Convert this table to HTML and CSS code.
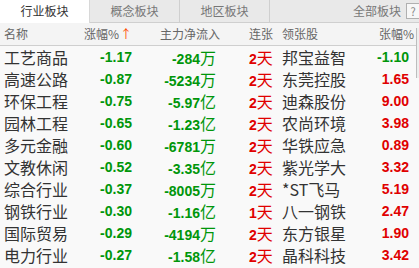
FILE: index.html
```html
<!DOCTYPE html>
<html>
<head>
<meta charset="utf-8">
<link rel="stylesheet" href="styles.css">
</head>
<body>
<div class="panel">
  <div class="tabs">
    <div class="tab active">行业板块</div>
    <div class="tab">概念板块</div>
    <div class="tab">地区板块</div>
    <div class="tab-rest">
      <span class="all">全部板块</span>
      <span class="help">?</span>
    </div>
  </div>
  <div class="grid head">
    <div class="c-name">名称</div>
    <div class="c-pct">涨幅%<span class="arrow">↑</span></div>
    <div class="c-flow">主力净流入</div>
    <div class="c-streak">连张</div>
    <div class="c-lead">领张股</div>
    <div class="c-pct2">张幅%</div>
  </div>
  <div class="rows">
    <div class="grid row"><div class="c-name">工艺商品</div><div class="c-pct num green">-1.17</div><div class="c-flow green"><span class="num">-284</span>万</div><div class="c-streak red"><span class="num">2</span>天</div><div class="c-lead">邦宝益智</div><div class="c-pct2 num green">-1.10</div></div>
    <div class="grid row"><div class="c-name">高速公路</div><div class="c-pct num green">-0.87</div><div class="c-flow green"><span class="num">-5234</span>万</div><div class="c-streak red"><span class="num">2</span>天</div><div class="c-lead">东莞控股</div><div class="c-pct2 num red">1.65</div></div>
    <div class="grid row"><div class="c-name">环保工程</div><div class="c-pct num green">-0.75</div><div class="c-flow green"><span class="num">-5.97</span>亿</div><div class="c-streak red"><span class="num">2</span>天</div><div class="c-lead">迪森股份</div><div class="c-pct2 num red">9.00</div></div>
    <div class="grid row"><div class="c-name">园林工程</div><div class="c-pct num green">-0.65</div><div class="c-flow green"><span class="num">-1.23</span>亿</div><div class="c-streak red"><span class="num">2</span>天</div><div class="c-lead">农尚环境</div><div class="c-pct2 num red">3.98</div></div>
    <div class="grid row"><div class="c-name">多元金融</div><div class="c-pct num green">-0.60</div><div class="c-flow green"><span class="num">-6781</span>万</div><div class="c-streak red"><span class="num">2</span>天</div><div class="c-lead">华铁应急</div><div class="c-pct2 num red">0.89</div></div>
    <div class="grid row"><div class="c-name">文教休闲</div><div class="c-pct num green">-0.52</div><div class="c-flow green"><span class="num">-3.35</span>亿</div><div class="c-streak red"><span class="num">2</span>天</div><div class="c-lead">紫光学大</div><div class="c-pct2 num red">3.32</div></div>
    <div class="grid row"><div class="c-name">综合行业</div><div class="c-pct num green">-0.37</div><div class="c-flow green"><span class="num">-8005</span>万</div><div class="c-streak red"><span class="num">2</span>天</div><div class="c-lead">*ST飞马</div><div class="c-pct2 num red">5.19</div></div>
    <div class="grid row"><div class="c-name">钢铁行业</div><div class="c-pct num green">-0.30</div><div class="c-flow green"><span class="num">-1.16</span>亿</div><div class="c-streak red"><span class="num">1</span>天</div><div class="c-lead">八一钢铁</div><div class="c-pct2 num red">2.47</div></div>
    <div class="grid row"><div class="c-name">国际贸易</div><div class="c-pct num green">-0.29</div><div class="c-flow green"><span class="num">-4194</span>万</div><div class="c-streak red"><span class="num">2</span>天</div><div class="c-lead">东方银星</div><div class="c-pct2 num red">1.90</div></div>
    <div class="grid row"><div class="c-name">电力行业</div><div class="c-pct num green">-0.27</div><div class="c-flow green"><span class="num">-1.58</span>亿</div><div class="c-streak red"><span class="num">2</span>天</div><div class="c-lead">晶科科技</div><div class="c-pct2 num red">3.42</div></div>
  </div>
  <div class="scroll-thumb"></div>
</div>
</body>
</html>
```
FILE: styles.css
```css
* { box-sizing: border-box; }
html, body { margin: 0; padding: 0; }
body {
  width: 419px;
  height: 268px;
  overflow: hidden;
  background: #f9f9f9;
  font-family: "Noto Sans CJK SC", "Liberation Sans", sans-serif;
  color: #333;
}
.panel {
  position: relative;
  width: 419px;
  height: 268px;
}
.tabs {
  display: flex;
  height: 23px;
  background: #e9e9e9;
  border-bottom: 1px solid #cfcfcf;
  font-size: 12px;
  line-height: 22px;
}
.tab {
  width: 90px;
  text-align: center;
  color: #777;
  border-right: 1px solid #cfcfcf;
  flex: none;
}
.tab.active {
  background: #fff;
  color: #333;
  height: 23px;
  border-right: 1px solid #d8d8d8;
}
.tab-rest {
  flex: 1;
  display: flex;
  justify-content: flex-end;
  align-items: center;
  color: #777;
}
.all { margin-right: 5px; }
.help {
  width: 14px;
  height: 16px;
  border: 1px solid #b0b0b0;
  background: #f7f7f7;
  font-size: 11px;
  line-height: 14px;
  text-align: center;
  color: #888;
  margin-right: -1px;
}
.grid {
  display: grid;
  grid-template-columns: 80px 48px 86px 64px 88px 40px;
  padding-left: 4px;
  height: 22px;
  line-height: 22px;
  white-space: nowrap;
}
.head {
  font-size: 12px;
  color: #666;
  background: #f4f4f4;
  border-bottom: 1px solid #cfcfcf;
  height: 23px;
}
.head .c-pct { padding-right: 1px; }
.head .c-flow { text-align: left; padding-left: 28px; }
.head .c-pct2 { padding-right: 0; margin-right: -4px; }
.arrow { color: #ff4a00; font-size: 12px; margin-left: 1px; }
.c-pct, .c-flow, .c-pct2 { text-align: right; }
.c-streak { padding-left: 31px; }
.row { font-size: 16px; }
.row .c-name, .row .c-lead { color: #333; }
.row .c-flow { padding-right: 2px; }
.row .c-pct2 { padding-right: 1px; }
.num {
  font-family: "Liberation Sans", Arial, sans-serif;
  font-weight: bold;
  font-size: 14px;
}
.green { color: #00960a; }
.red { color: #e00000; }
.rows { padding-top: 0; }
.scroll-thumb {
  position: absolute;
  left: 416px;
  top: 28px;
  width: 3px;
  height: 50px;
  border-left: 1px solid #bdbdbd;
  background: #eeeeee;
}
```
